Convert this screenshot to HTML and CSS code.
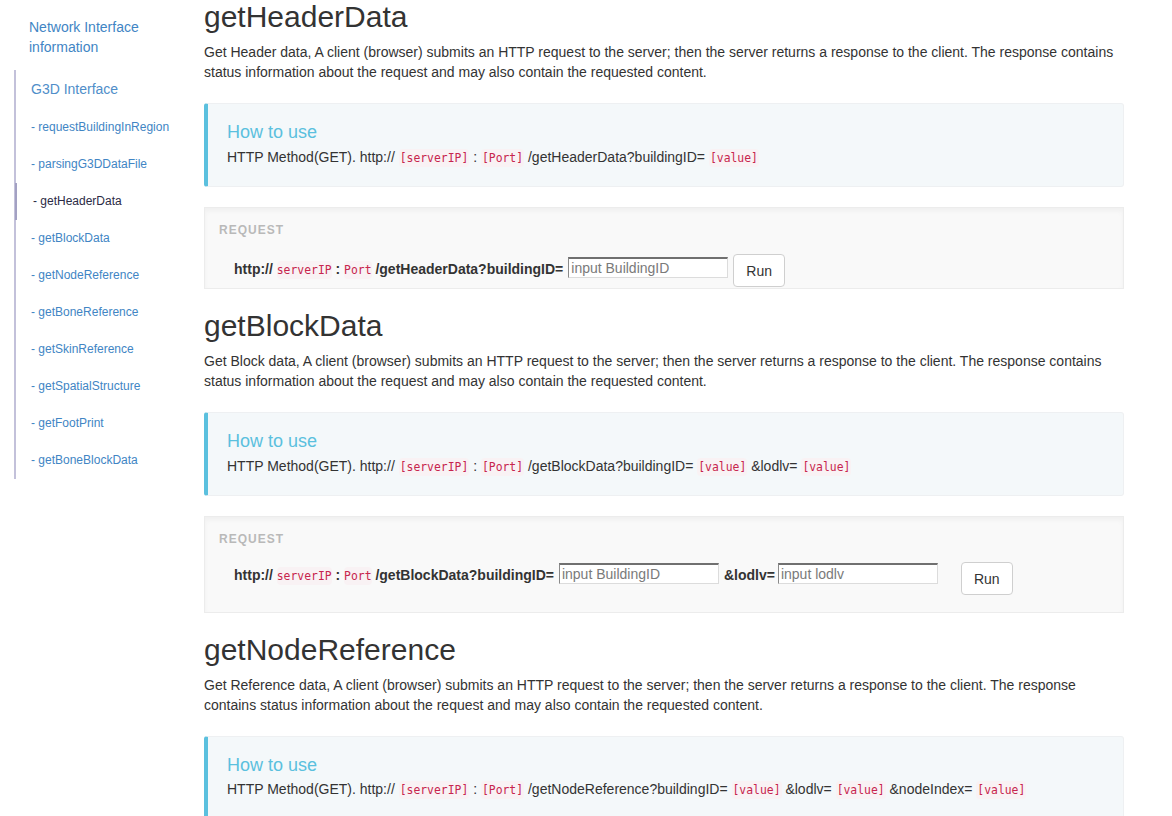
FILE: index.html
```html
<!DOCTYPE html>
<html>
<head>
<meta charset="utf-8">
<title>G3D Interface</title>
<link rel="stylesheet" href="styles.css">
</head>
<body>
<div class="page">
  <nav class="sidebar">
    <a class="nav-top" href="#">Network Interface information</a>
    <ul class="subnav">
      <li class="head"><a href="#">G3D Interface</a></li>
      <li><a href="#">- requestBuildingInRegion</a></li>
      <li><a href="#">- parsingG3DDataFile</a></li>
      <li class="active"><a href="#">- getHeaderData</a></li>
      <li><a href="#">- getBlockData</a></li>
      <li><a href="#">- getNodeReference</a></li>
      <li><a href="#">- getBoneReference</a></li>
      <li><a href="#">- getSkinReference</a></li>
      <li><a href="#">- getSpatialStructure</a></li>
      <li><a href="#">- getFootPrint</a></li>
      <li><a href="#">- getBoneBlockData</a></li>
    </ul>
  </nav>
  <main class="main">
    <section class="api">
      <h2 class="title">getHeaderData</h2>
      <p class="desc">Get Header data, A client (browser) submits an HTTP request to the server; then the server returns a response to the client. The response contains status information about the request and may also contain the requested content.</p>
      <div class="callout">
        <h4>How to use</h4>
        <p>HTTP Method(GET). http:// <code>[serverIP]</code> : <code>[Port]</code> /getHeaderData?buildingID= <code>[value]</code></p>
      </div>
      <div class="request request-tight">
        <div class="req-label">Request</div>
        <div class="req-row">
          <span class="url">http:// <code>serverIP</code> : <code>Port</code> /getHeaderData?buildingID=</span>
          <input class="field" type="text" placeholder="input BuildingID">
          <button class="btn">Run</button>
        </div>
      </div>
    </section>

    <section class="api">
      <h2 class="title">getBlockData</h2>
      <p class="desc">Get Block data, A client (browser) submits an HTTP request to the server; then the server returns a response to the client. The response contains status information about the request and may also contain the requested content.</p>
      <div class="callout">
        <h4>How to use</h4>
        <p>HTTP Method(GET). http:// <code>[serverIP]</code> : <code>[Port]</code> /getBlockData?buildingID= <code>[value]</code> &amp;lodlv= <code>[value]</code></p>
      </div>
      <div class="request request-wide">
        <div class="req-label">Request</div>
        <div class="req-row">
          <span class="url">http:// <code>serverIP</code> : <code>Port</code> /getBlockData?buildingID=</span>
          <input class="field" type="text" placeholder="input BuildingID">
          <span class="url param">&amp;lodlv=</span>
          <input class="field field-next" type="text" placeholder="input lodlv">
          <button class="btn btn-far">Run</button>
        </div>
      </div>
    </section>

    <section class="api">
      <h2 class="title">getNodeReference</h2>
      <p class="desc">Get Reference data, A client (browser) submits an HTTP request to the server; then the server returns a response to the client. The response contains status information about the request and may also contain the requested content.</p>
      <div class="callout">
        <h4>How to use</h4>
        <p>HTTP Method(GET). http:// <code>[serverIP]</code> : <code>[Port]</code> /getNodeReference?buildingID= <code>[value]</code> &amp;lodlv= <code>[value]</code> &amp;nodeIndex= <code>[value]</code></p>
      </div>
    </section>
  </main>
</div>
</body>
</html>
```

FILE: styles.css
```css
html, body {
  margin: 0;
  padding: 0;
  background: #fff;
}

body {
  font-family: "Liberation Sans", Arial, Helvetica, sans-serif;
  font-size: 14px;
  line-height: 20px;
  color: #333;
}

.page {
  display: flex;
  align-items: flex-start;
}

/* ---------- sidebar ---------- */
.sidebar {
  width: 204px;
  flex: none;
  box-sizing: border-box;
  padding: 17px 0 0 14px;
}

.sidebar a {
  text-decoration: none;
}

.nav-top {
  display: block;
  width: 150px;
  padding: 0 15px;
  font-size: 14px;
  line-height: 20px;
  color: #4185c4;
}

.subnav {
  list-style: none;
  margin: 13px 0 0 0;
  padding: 0;
  width: 170px;
  border-left: 2px solid #c3c1da;
}

.subnav li a {
  display: block;
  padding-left: 15px;
  font-size: 12px;
  line-height: 37px;
  height: 37px;
  color: #4185c4;
  white-space: nowrap;
}

.subnav li.head a {
  font-size: 14px;
  line-height: 38px;
  height: 39px;
  color: #4f8ec9;
}

.subnav li.active a {
  position: relative;
  padding-left: 17px;
  color: #2b2b45;
}

.subnav li.active a::before {
  content: "";
  position: absolute;
  left: -1px;
  top: 0;
  bottom: 0;
  width: 2px;
  background: #a3a1c3;
}

/* ---------- main ---------- */
.main {
  width: 920px;
  flex: none;
}

.title {
  margin: 20px 0 9px;
  font-size: 30px;
  line-height: 33px;
  font-weight: 500;
  color: #333;
}

.api:first-child .title {
  margin-top: 0;
}

.desc {
  margin: 0 0 10px;
}

code {
  font-family: "DejaVu Sans Mono", "Liberation Mono", monospace;
  font-size: 11.4px;
  padding: 2px 1px;
  color: #c7254e;
  background: #f9f2f4;
  border-radius: 4px;
}

.callout {
  margin: 21px 0 20px;
  padding: 19px 20px 18px 19px;
  border: 1px solid #eef0f2;
  border-left: 4px solid #5bc0de;
  border-radius: 3px;
  background: #f4f8fa;
}

.callout h4 {
  margin: 0 0 4px;
  font-size: 18px;
  line-height: 19.8px;
  font-weight: 500;
  color: #5bc0de;
}

.callout p {
  margin: 0;
}

/* ---------- request box ---------- */
.request {
  padding: 14px 14px 15px;
  border: 1px solid #ececec;
  background: #f9f9f9;
  box-shadow: inset 0 3px 5px rgba(0, 0, 0, 0.04);
}

.request-tight {
  padding-bottom: 0;
}

.req-label {
  font-size: 12px;
  line-height: 17px;
  font-weight: bold;
  letter-spacing: 1px;
  text-transform: uppercase;
  color: #b9b9b9;
}

.req-row {
  display: flex;
  align-items: flex-start;
  height: 34px;
  margin-top: 15px;
  padding-left: 15px;
}

.request-wide .req-row {
  margin-top: 14px;
  height: 35px;
}

.url {
  margin-top: 5px;
  font-weight: bold;
  white-space: nowrap;
}

.url code {
  font-weight: normal;
  padding: 2px 0;
}

.param {
  margin-left: 5px;
}

.field {
  box-sizing: border-box;
  width: 160px;
  height: 21px;
  margin: 3px 0 0 5px;
  padding: 1px 2px;
  border: 1px solid #dcdcdc;
  border-top: 2px solid #707070;
  border-left: 1px solid #8a8a8a;
  background: #fff;
  font-family: "Liberation Sans", Arial, sans-serif;
  font-size: 14px;
  color: #333;
  outline: none;
}

.request-wide .field {
  margin-top: 1px;
}

.request-wide .field-next {
  margin-left: 3px;
}

.request-wide .url {
  margin-top: 3px;
}

.field::placeholder {
  color: #7a7a7a;
}

.btn {
  box-sizing: border-box;
  height: 33px;
  margin-left: 5px;
  padding: 6px 12px;
  border: 1px solid #cfcfcf;
  border-radius: 4px;
  background: #fff;
  font-family: "Liberation Sans", Arial, sans-serif;
  font-size: 14px;
  line-height: 20px;
  color: #333;
}

.btn-far {
  margin-left: 23px;
}
```
